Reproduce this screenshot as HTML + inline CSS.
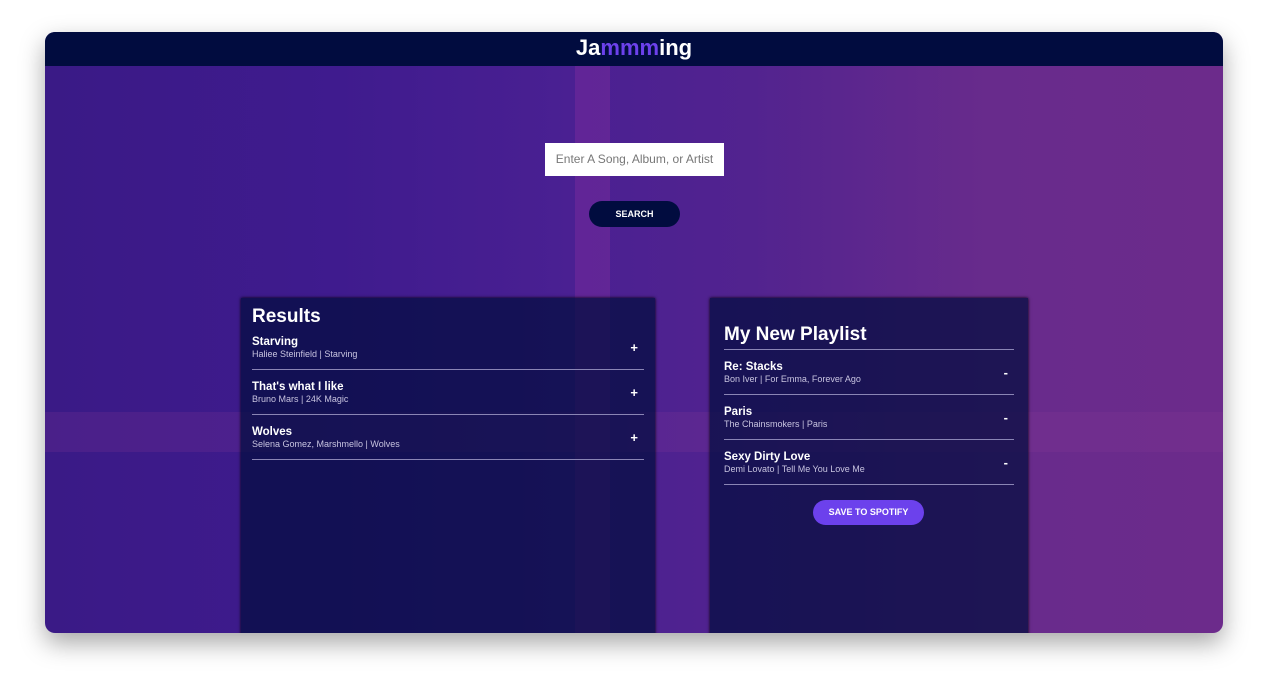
<!DOCTYPE html>
<html><head><style>
*{margin:0;padding:0;box-sizing:border-box}
body{width:1270px;height:691px;background:#fff;font-family:"Liberation Sans",sans-serif;position:relative;overflow:hidden}
.win{position:absolute;left:45px;top:32px;width:1178px;height:601px;border-radius:10px;overflow:hidden;box-shadow:0 10px 25px rgba(0,0,0,.35);
background:linear-gradient(90deg,#3a1a86 0%,#3f1b8e 25%,#4a2092 45%,#52238f 60%,#682b8c 80%,#6c2b8b 100%)}
.hd{position:absolute;left:0;top:0;width:100%;height:34px;background:#010c3f;text-align:center;color:#fff;font-weight:bold;font-size:22px;line-height:32px}
.hd span{color:#6c41ec}
.stripe{position:absolute;top:34px;height:567px}
.inp{position:absolute;left:500px;top:111px;width:179px;height:33px;background:#fff;color:#777;font-size:12px;text-align:center;line-height:33px}
.btn{position:absolute;left:544px;top:169px;width:91px;height:26px;border-radius:13px;background:#010c3f;color:#fff;font-size:9px;font-weight:bold;text-align:center;line-height:26px}
.pn{position:absolute;top:266px;height:340px;background:rgba(1,12,63,.72);box-shadow:0 0 3px #000;color:#fff}
h2{font-size:19px;font-weight:bold;line-height:20px}
.tr{position:relative;border-bottom:1px solid #8a85b5;height:45px;padding-top:11px}
.tr b{font-size:11.5px;display:block;line-height:13px}
.tr i{font-style:normal;font-size:9px;color:#c8c4e0;display:block;margin-top:0px}
.tr em{position:absolute;right:6px;top:15px;font-style:normal;font-size:13px;font-weight:bold}
.save{position:absolute;left:103px;top:202px;width:111px;height:25px;border-radius:13px;background:#6c41ec;color:#fff;font-size:9px;font-weight:bold;text-align:center;line-height:25px}
</style></head><body>
<div class="win">
<div class="stripe" style="left:530px;width:35px;background:rgba(140,50,160,.35)"></div>
<div class="stripe" style="left:0;width:1178px;top:380px;height:40px;background:rgba(140,60,150,.2)"></div>
<div class="hd">Ja<span>mmm</span>ing</div>
<div class="inp">Enter A Song, Album, or Artist</div>
<div class="btn">SEARCH</div>
<div class="pn" style="left:196px;width:414px;padding:7px 11px">
<h2 style="position:relative;top:2px">Results</h2>
<div class="tr"><b>Starving</b><i>Haliee Steinfield | Starving</i><em>+</em></div>
<div class="tr"><b>That's what I like</b><i>Bruno Mars | 24K Magic</i><em>+</em></div>
<div class="tr"><b>Wolves</b><i>Selena Gomez, Marshmello | Wolves</i><em>+</em></div>
</div>
<div class="pn" style="left:665px;width:318px;padding:26px 14px 0 14px">
<h2 style="line-height:22px;padding-bottom:3px;border-bottom:1px solid #8a85b5">My New Playlist</h2>
<div class="tr"><b>Re: Stacks</b><i>Bon Iver | For Emma, Forever Ago</i><em>-</em></div>
<div class="tr"><b>Paris</b><i>The Chainsmokers | Paris</i><em>-</em></div>
<div class="tr"><b>Sexy Dirty Love</b><i>Demi Lovato | Tell Me You Love Me</i><em>-</em></div>
<div class="save">SAVE TO SPOTIFY</div>
</div>
</div>
</body></html>
